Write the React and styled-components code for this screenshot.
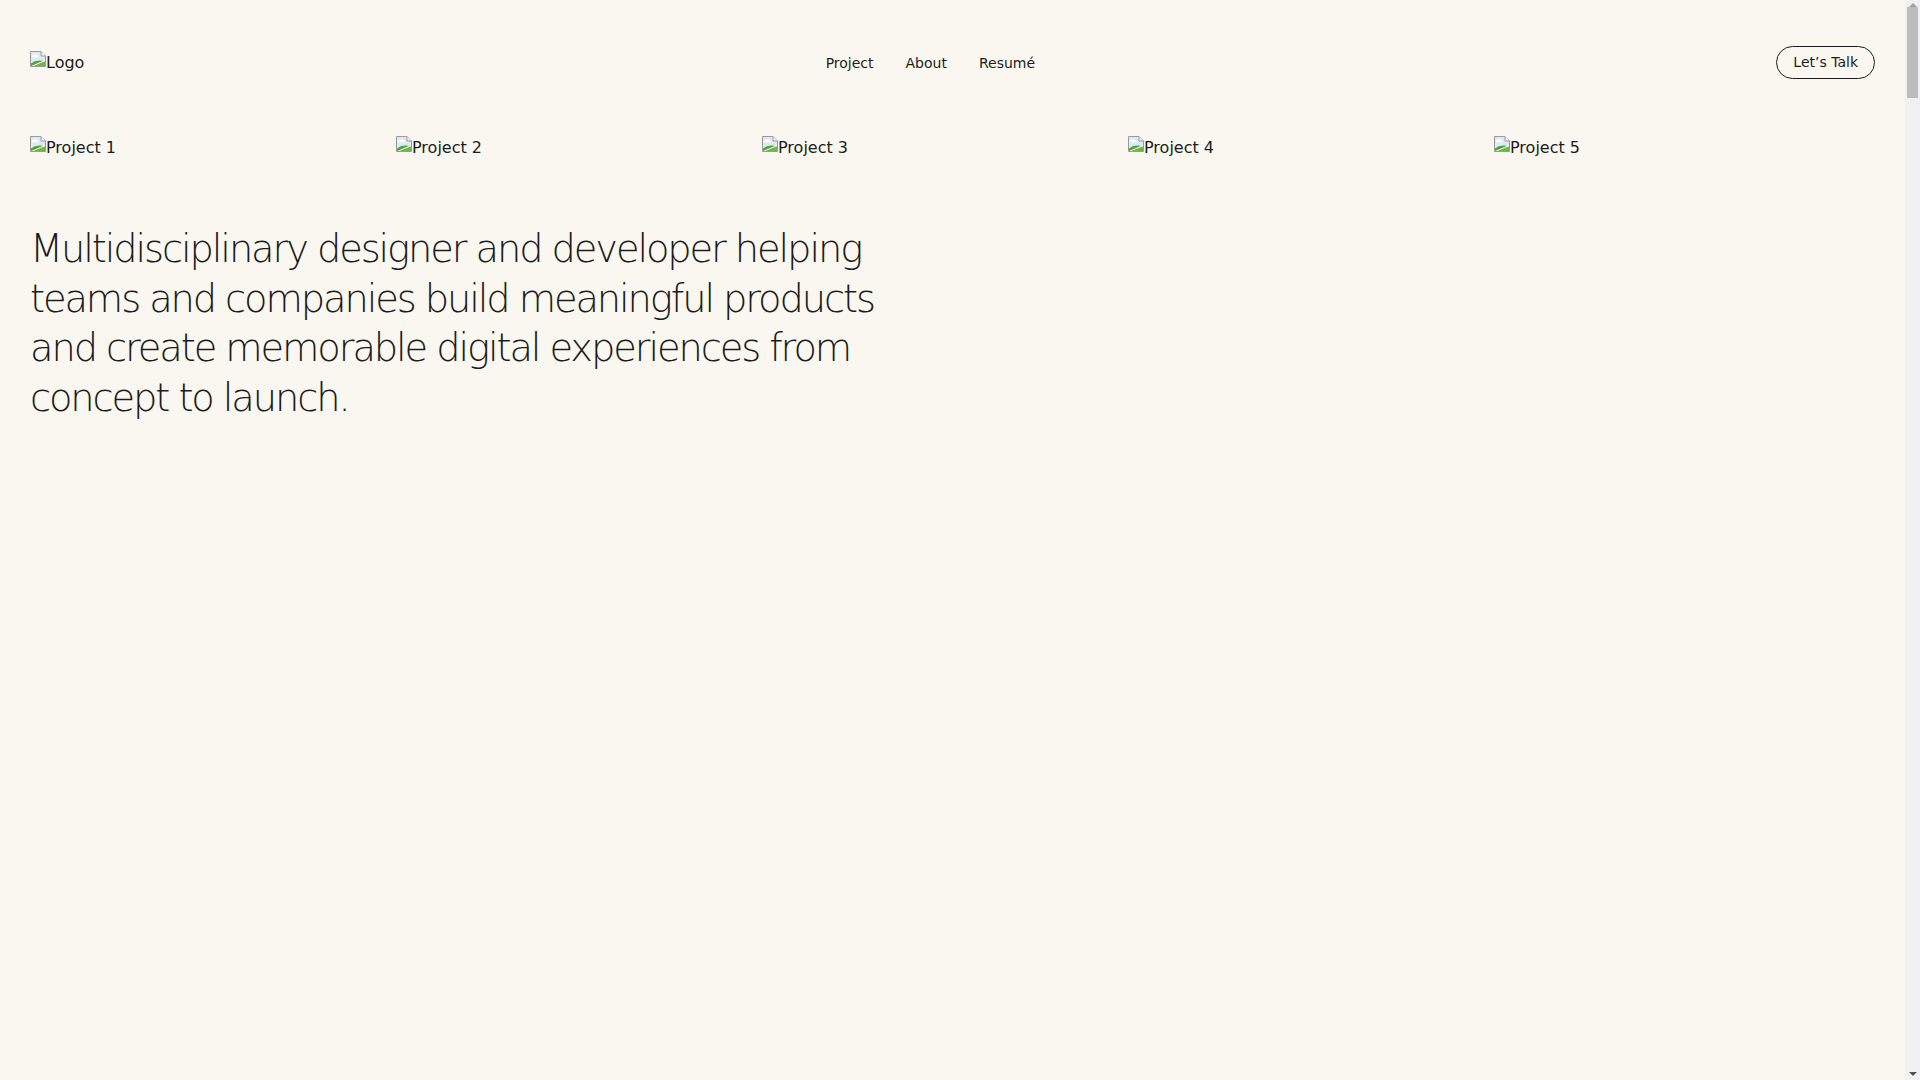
import React from "react";
import styled, { createGlobalStyle } from "styled-components";

const GlobalStyle = createGlobalStyle`
  html, body { margin: 0; padding: 0; height: 100%; overflow: hidden; }
  body {
    background: #faf7f0;
    color: #1c1c1c;
    font-family: "DejaVu Sans", "Noto Sans", sans-serif;
  }
  * { box-sizing: border-box; }
`;

const Frame = styled.div`
  display: flex;
  height: 100vh;
`;

const Viewport = styled.div`
  flex: 1;
  min-width: 0;
  height: 100vh;
  overflow-y: scroll;
  scrollbar-width: none;
  &::-webkit-scrollbar { display: none; }
`;

const ScrollTrack = styled.div`
  flex: none;
  width: 15px;
  height: 100vh;
  background: #f1f1f1;
  display: flex;
  flex-direction: column;
  align-items: center;
`;

const Arrow = styled.div`
  width: 0;
  height: 0;
  border-left: 4px solid transparent;
  border-right: 4px solid transparent;
  ${(p) =>
    p.$down
      ? `border-top: 4px solid #505050; margin-bottom: 4px;`
      : `border-bottom: 4px solid #a3a3a3; margin-top: 3px;`}
`;

const Thumb = styled.div`
  width: 11px;
  height: 91px;
  background: #bcbcbc;
`;

const Spacer = styled.div`
  flex: 1;
`;

const Page = styled.div`
  min-height: 12600px;
  padding: 0 30px;
`;

const Header = styled.header`
  display: flex;
  align-items: center;
  justify-content: space-between;
  padding-top: 46px;
  height: 79px;
`;

const Nav = styled.nav`
  display: flex;
  gap: 32px;
  font-size: 14px;
`;

const NavLink = styled.a`
  color: #1c1c1c;
  text-decoration: none;
  cursor: pointer;
`;

const TalkButton = styled.button`
  font-family: inherit;
  font-size: 14px;
  line-height: 17px;
  color: #1c1c1c;
  background: transparent;
  border: 1px solid #1c1c1c;
  border-radius: 999px;
  padding: 7px 16px;
  cursor: pointer;
`;

const Broken = styled.span`
  display: inline-flex;
  align-items: flex-start;
  font-size: 16px;
  line-height: 19px;
  color: #1c1c1c;
  svg { flex: none; margin-top: ${(p) => p.$iconOffset || 0}px; }
`;

const Projects = styled.section`
  display: grid;
  grid-template-columns: repeat(5, 342px);
  column-gap: 24px;
  margin-top: 58px;
`;

const Hero = styled.h1`
  margin: 67px 0 0;
  max-width: 900px;
  font-size: 38.4px;
  line-height: 49.7px;
  font-weight: 300;
  letter-spacing: -0.055em;
`;

function BrokenIcon() {
  return (
    <svg width="16" height="16" viewBox="0 0 16 16">
      <path d="M0.5 0.5 H11 L15.5 5 V15.5 H0.5 Z" fill="#dfe9f6" stroke="#9a9a9a" />
      <path d="M11 0.5 V5 H15.5" fill="#f4f4f4" stroke="#9a9a9a" />
      <path d="M2 5 q1-2.2 3-1.2 q1.6-0.6 2.4 0.8 q1.4 0.2 1 1.6 H2 Z" fill="#ffffff" />
      <path d="M1 15 V12.5 Q6 8 15 10.5 V15 Z" fill="#53a336" />
      <path d="M1 15 L15 9 V10.6 L4 15 Z" fill="#ffffff" opacity="0.9" />
      <path d="M4 15 L15 10.6 V15 Z" fill="#6db84a" />
    </svg>
  );
}

function AltImage({ alt, iconOffset }) {
  return (
    <Broken role="img" aria-label={alt} $iconOffset={iconOffset}>
      <BrokenIcon />
      <span>{alt}</span>
    </Broken>
  );
}

export default function App() {
  const projects = ["Project 1", "Project 2", "Project 3", "Project 4", "Project 5"];
  return (
    <>
      <GlobalStyle />
      <Frame>
        <Viewport>
          <Page>
            <Header>
              <AltImage alt="Logo" iconOffset={-2} />
              <Nav>
                <NavLink>Project</NavLink>
                <NavLink>About</NavLink>
                <NavLink>Resumé</NavLink>
              </Nav>
              <TalkButton>Let’s Talk</TalkButton>
            </Header>
            <Projects>
              {projects.map((p) => (
                <div key={p}>
                  <AltImage alt={p} iconOffset={-2} />
                </div>
              ))}
            </Projects>
            <Hero>
              Multidisciplinary designer and developer helping teams and companies build
              meaningful products and create memorable digital experiences from concept to
              launch.
            </Hero>
          </Page>
        </Viewport>
        <ScrollTrack aria-hidden="true">
          <Arrow />
          <Thumb />
          <Spacer />
          <Arrow $down />
        </ScrollTrack>
      </Frame>
    </>
  );
}
